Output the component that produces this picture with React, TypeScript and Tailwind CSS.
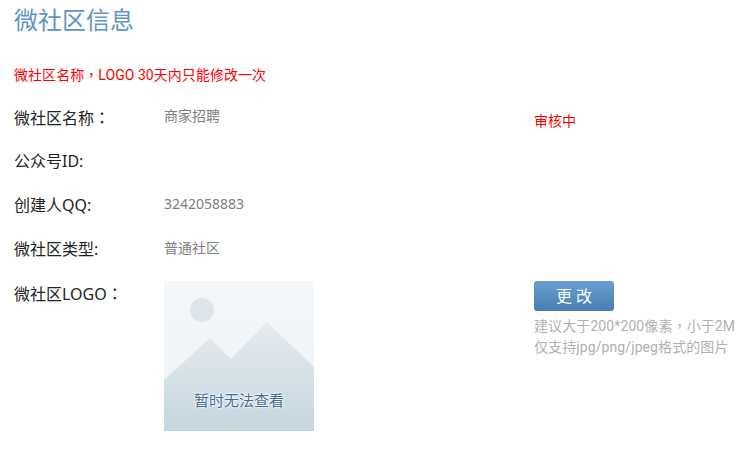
const rows = [
  { label: "公众号ID:", value: "" },
  { label: "创建人QQ:", value: "3242058883" },
  { label: "微社区类型:", value: "普通社区" },
];

const font = "font-['Noto_Sans','Noto_Sans_CJK_SC',sans-serif]";
const narrow = "font-['Roboto','Noto_Sans_CJK_SC',sans-serif]";

// the screenshot has full-width punctuation centred in its cell, as TC fonts draw it
const Punct = ({ children }: { children: string }) => (
  <span className="font-['Noto_Sans_CJK_TC',sans-serif]">{children}</span>
);

const NoImage = () => (
  <div className="relative w-[150px] h-[150px]">
    <svg width="150" height="150" viewBox="0 0 150 150" className="block">
      <defs>
        <linearGradient id="bg" x1="0" y1="0" x2="0" y2="1">
          <stop offset="0" stopColor="#f4f7f9" />
          <stop offset="1" stopColor="#eef3f6" />
        </linearGradient>
        <linearGradient id="hill" x1="0" y1="0" x2="0" y2="1">
          <stop offset="0" stopColor="#e6ecf0" />
          <stop offset="1" stopColor="#c5d5de" />
        </linearGradient>
      </defs>
      <rect width="150" height="150" fill="url(#bg)" />
      <circle cx="38" cy="29" r="12" fill="#dce4ec" />
      <path d="M0 99 L46 57 L67 78 L103 41 L150 86 L150 150 L0 150 Z" fill="url(#hill)" />
    </svg>
    <span className="absolute left-0 right-0 top-[109px] text-center text-[15px] leading-[20px] text-[#3f6d93] [text-shadow:0_0_2px_#fff,0_0_2px_#fff,0_0_3px_#fff]">
      暂时无法查看
    </span>
  </div>
);

export default function App() {
  return (
    <div className={`${font} w-[752px] h-[453px] bg-white overflow-hidden px-[14px]`}>
      <h1 className="text-[24px] leading-[40px] text-[#6094c8] font-normal">微社区信息</h1>
      <p className={`${narrow} mt-[24px] h-[20px] text-[14px] leading-[20px] tracking-[0.05px] text-[#ff0000]`}>
        微社区名称<Punct>，</Punct>LOGO 30天内只能修改一次
      </p>

      <div className="mt-[11px] flex flex-col">
        <div className="flex h-[44px] items-center">
          <div className="w-[150px] text-[16px] text-[#222]">
            微社区名称<Punct>：</Punct>
          </div>
          <div className="w-[370px] text-[14px] text-[#808080] -translate-y-[2px]">商家招聘</div>
          <div className="text-[14px] text-[#ff0000] translate-y-[3px]">审核中</div>
        </div>
        {rows.map((row) => (
          <div key={row.label} className="flex h-[44px] items-center">
            <div className="w-[150px] text-[16px] text-[#222]">{row.label}</div>
            <div className="text-[14px] text-[#808080] -translate-y-[2px]">{row.value}</div>
          </div>
        ))}
        <div className="flex mt-[10px]">
          <div className="w-[150px] h-[24px] text-[16px] leading-[24px] text-[#222]">
            微社区LOGO<Punct>：</Punct>
          </div>
          <div className="w-[370px]">
            <NoImage />
          </div>
          <div>
            <button className="block w-[80px] h-[30px] rounded-[3px] bg-gradient-to-b from-[#6c9fd0] to-[#467db3] text-[16px] text-white">
              更 改
            </button>
            <p className={`${narrow} mt-[4px] text-[14px] leading-[21px] tracking-[0.1px] text-[#b0b0b0] whitespace-nowrap`}>
              建议大于200*200像素<Punct>，</Punct>小于2M
              <br />
              仅支持jpg/png/jpeg格式的图片
            </p>
          </div>
        </div>
      </div>
    </div>
  );
}
